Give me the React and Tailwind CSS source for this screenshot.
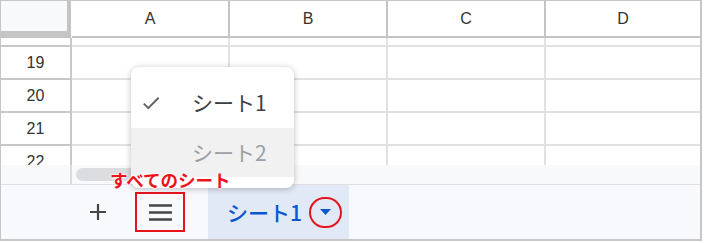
import React from "react";

const cols = ["A", "B", "C", "D"];
const rows = [19, 20, 21, 22];

const CheckIcon = () => (
  <svg width="22" height="22" viewBox="0 0 24 24" fill="#5f6368">
    <path d="M9 16.17L4.83 12l-1.42 1.41L9 19 21 7l-1.41-1.41z" />
  </svg>
);

const App = () => {
  return (
    <div className="w-[704px] h-[243px] bg-white" style={{ fontFamily: '"Liberation Sans", Arial, sans-serif' }}>
      <div className="relative w-[702px] h-[241px] border-l border-t border-r-2 border-b-2 border-[#c6c6c6] flex flex-col overflow-hidden">
        {/* Column header */}
        <div className="flex h-[37px] shrink-0">
          <div className="w-[71px] h-full">
            <div className="w-[70px] h-full bg-[#f8f9fa] border-r-4 border-b-[7px] border-[#c4c4c4]" />
          </div>
          {cols.map((c, i) => (
            <div
              key={c}
              className={`${i < 3 ? "w-[158px] border-r-2" : "flex-1"} h-full border-b-2 border-[#c4c4c4] flex items-center justify-center text-[16px] text-[#333]`}
            >
              {c}
            </div>
          ))}
        </div>

        {/* Grid body */}
        <div className="h-[127px] overflow-hidden shrink-0">
          {/* frozen gap row */}
          <div className="flex h-[9px]">
            <div className="w-[71px] border-r-2 border-b-2 border-[#c8c8c8]" />
            <div className="w-[158px] border-r-2 border-b-2 border-[#e1e1e1]" />
            <div className="w-[158px] border-r-2 border-b-2 border-[#e1e1e1]" />
            <div className="w-[158px] border-r-2 border-b-2 border-[#e1e1e1]" />
            <div className="flex-1 border-b-2 border-[#e1e1e1]" />
          </div>
          {rows.map((r) => (
            <div key={r} className="flex h-[33px]">
              <div className="w-[71px] border-r-2 border-b-2 border-[#c8c8c8] flex items-center justify-center text-[16px] text-[#333]">
                {r}
              </div>
              <div className="w-[158px] border-r-2 border-b-2 border-[#e1e1e1]" />
              <div className="w-[158px] border-r-2 border-b-2 border-[#e1e1e1]" />
              <div className="w-[158px] border-r-2 border-b-2 border-[#e1e1e1]" />
              <div className="flex-1 border-b-2 border-[#e1e1e1]" />
            </div>
          ))}
        </div>

        {/* Scrollbar strip */}
        <div className="flex h-[19px] shrink-0 bg-[#f8f9fa]">
          <div className="w-[71px] border-r-2 border-[#dcdcdc]" />
          <div className="flex-1 flex items-center pl-[4px]">
            <div className="w-[90px] h-[13px] rounded-full bg-[#dadce0]" />
          </div>
        </div>

        {/* Sheet tab bar */}
        <div className="flex-1 flex items-center border-t border-[#e0e0e0] bg-[#f8f9fc]">
          <svg className="ml-[88px]" width="18" height="18" viewBox="0 0 18 18">
            <path d="M9 1v16M1 9h16" stroke="#444746" strokeWidth="2.2" />
          </svg>
          <div className="ml-[28px] w-[50px] h-[40px] border-2 border-[#e8141c] flex items-center justify-center">
            <svg width="23" height="17" viewBox="0 0 23 17">
              <path d="M0 1.5h23M0 8.5h23M0 15.5h23" stroke="#444746" strokeWidth="2.6" />
            </svg>
          </div>
          <div
            className="ml-[23px] w-[141px] h-full bg-[#e1e9f7] flex items-center pl-[19px]"
            style={{ fontFamily: '"Noto Sans CJK JP", "Noto Sans", sans-serif' }}
          >
            <span className="text-[21px] text-[#0b57d0] font-medium leading-none">シート1</span>
            <div className="ml-[7px] w-[33px] h-[31px] rounded-full border-2 border-[#e8141c] flex items-center justify-center">
              <svg width="11" height="6" viewBox="0 0 11 6">
                <path d="M0 0h11L5.5 6z" fill="#0b57d0" />
              </svg>
            </div>
          </div>
        </div>

        {/* Dropdown menu */}
        <div
          className="absolute left-[130px] top-[66px] w-[163px] h-[121px] bg-white rounded-lg shadow-[0_1px_6px_rgba(0,0,0,0.25)] pt-[10px] overflow-hidden"
          style={{ fontFamily: '"Noto Sans CJK JP", "Noto Sans", sans-serif' }}
        >
          <div className="h-[51px] flex items-center pl-[9px]">
            <CheckIcon />
            <span className="ml-[30px] text-[21px] text-[#3c4043] leading-none">シート1</span>
          </div>
          <div className="h-[49px] flex items-center pl-[61px] bg-[#f1f1f1]">
            <span className="text-[21px] text-[#9aa0a6] leading-none">シート2</span>
          </div>
        </div>

        {/* Annotation label */}
        <div
          className="absolute left-[109px] top-[170px] text-[17.5px] font-bold text-[#f0121b] leading-none"
          style={{
            fontFamily: '"Noto Sans CJK JP", sans-serif',
            textShadow: "0 0 2px #fff, 0 0 2px #fff, 0 0 2px #fff",
          }}
        >
          すべてのシート
        </div>
      </div>
    </div>
  );
};

export default App;
